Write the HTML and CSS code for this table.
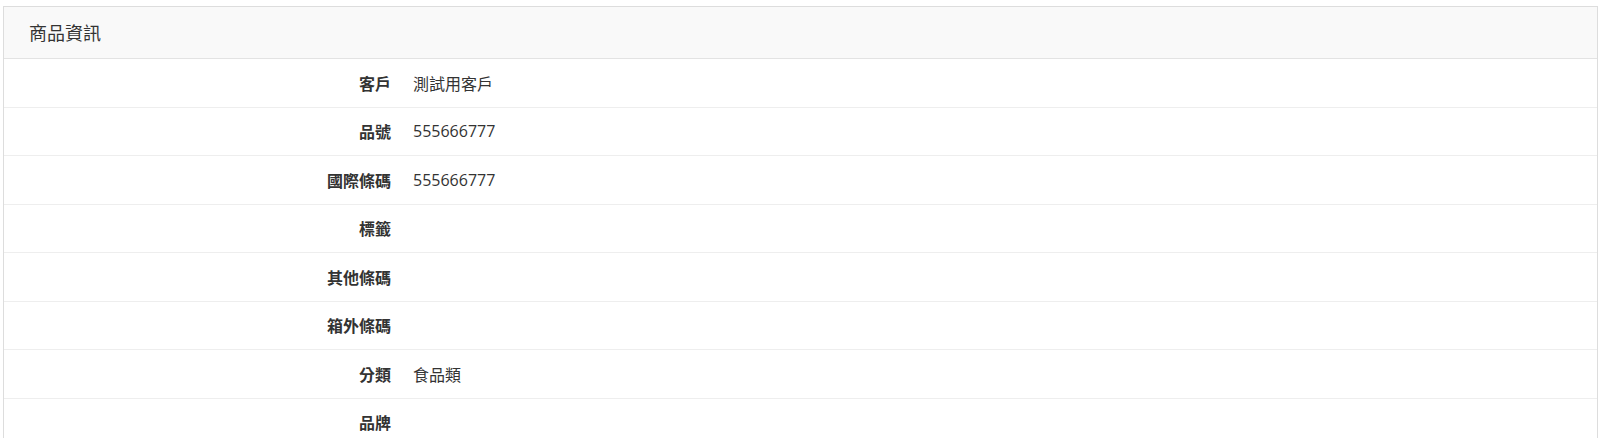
FILE: index.html
```html
<!DOCTYPE html>
<html lang="zh-Hant">
<head>
<meta charset="utf-8">
<title>商品資訊</title>
<link rel="stylesheet" href="styles.css">
</head>
<body>
<div class="panel">
  <div class="panel-heading">商品資訊</div>
  <div class="panel-body">
    <div class="row"><div class="label">客戶</div><div class="value">測試用客戶</div></div>
    <div class="row"><div class="label">品號</div><div class="value">555666777</div></div>
    <div class="row"><div class="label">國際條碼</div><div class="value">555666777</div></div>
    <div class="row"><div class="label">標籤</div><div class="value"></div></div>
    <div class="row"><div class="label">其他條碼</div><div class="value"></div></div>
    <div class="row"><div class="label">箱外條碼</div><div class="value"></div></div>
    <div class="row"><div class="label">分類</div><div class="value">食品類</div></div>
    <div class="row"><div class="label">品牌</div><div class="value"></div></div>
  </div>
</div>
</body>
</html>
```

FILE: styles.css
```css
html, body {
  margin: 0;
  padding: 0;
  background: #ffffff;
  overflow: hidden;
}
body {
  font-family: "Open Sans", "Noto Sans CJK TC", sans-serif;
  color: #333333;
  font-size: 16px;
}
.panel {
  margin: 6px 2px 0 3px;
  border: 1px solid #dddddd;
  background: #ffffff;
}
.panel-heading {
  height: 52px;
  box-sizing: border-box;
  display: flex;
  align-items: center;
  padding: 0 25px 1px;
  font-size: 18px;
  background: #f9f9f9;
  border-bottom: 1px solid #e3e3e3;
  color: #333333;
}
.row {
  display: grid;
  grid-template-columns: 387px 1fr;
  column-gap: 22px;
  align-items: center;
  height: 47.5px;
  border-bottom: 1px solid #eeeeee;
}
.label {
  text-align: right;
  font-weight: bold;
}
.value {
  font-weight: normal;
}
```
